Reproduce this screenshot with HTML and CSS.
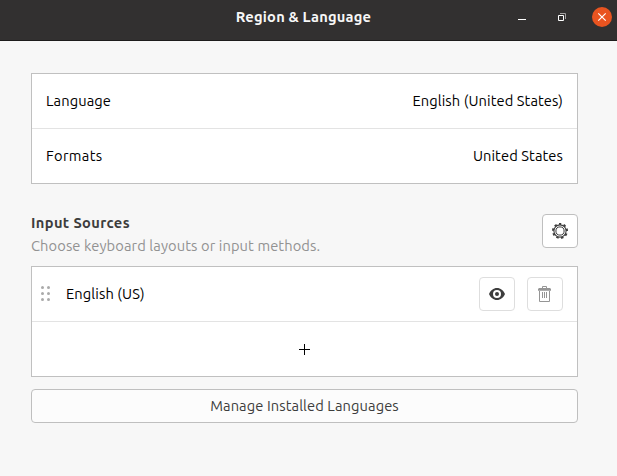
FILE: index.html
```html
<!DOCTYPE html>
<html lang="en">
<head>
<meta charset="utf-8">
<title>Region &amp; Language</title>
<link rel="stylesheet" href="styles.css">
</head>
<body>
<header class="titlebar">
  <h1 class="title">Region &amp; Language</h1>
  <div class="controls">
    <svg width="20" height="20" viewBox="0 0 20 20"><path d="M6 12h8v1H6z" fill="#fff"/></svg>
    <svg width="20" height="20" viewBox="0 0 20 20" fill="none"><path d="M8 6.5h5.5V12" stroke="#a3a1a1"/><path d="M6.5 8.5h5v5h-5z" stroke="#fff"/></svg>
    <svg width="20" height="20" viewBox="0 0 20 20"><circle cx="10" cy="10" r="10" fill="#e95420"/><path d="M6.3 6.3l7.4 7.4M13.7 6.3l-7.4 7.4" stroke="#fff" stroke-width="1.2"/></svg>
  </div>
</header>
<main class="content">
  <section class="list">
    <div class="row"><span class="language">Language</span><span class="locale">English (United States)</span></div>
    <div class="row"><span class="formats">Formats</span><span class="country">United States</span></div>
  </section>
  <section class="section-head">
    <div>
      <h2 class="heading">Input Sources</h2>
      <p class="hint">Choose keyboard layouts or input methods.</p>
    </div>
    <button class="icon-button options" aria-label="Options">
      <svg width="18" height="18" viewBox="0 0 18 18" fill="none" stroke="#3d3d3d"><circle cx="9" cy="9" r="7" stroke-width="2" stroke-dasharray="2.4 2.487" stroke-dashoffset="1.2" transform="rotate(-90 9 9)"/><circle cx="9" cy="9" r="6.1" stroke-width="1.1"/><circle cx="9" cy="9" r="4.1" stroke-width="1"/></svg>
    </button>
  </section>
  <section class="list">
    <div class="row source">
      <svg class="grip" width="9" height="15" viewBox="0 0 9 15" fill="#aaa"><circle cx="1.5" cy="1.5" r="1.5"/><circle cx="7.5" cy="1.5" r="1.5"/><circle cx="1.5" cy="7.5" r="1.5"/><circle cx="7.5" cy="7.5" r="1.5"/><circle cx="1.5" cy="13.5" r="1.5"/><circle cx="7.5" cy="13.5" r="1.5"/></svg>
      <span class="source-name">English (US)</span>
      <button class="icon-button" aria-label="Preview">
        <svg width="16" height="16" viewBox="0 0 16 16"><path fill="#3d3d3d" fill-rule="evenodd" d="M8 2C4.5 2 1.5 4.500 0 8c1.500 3.500 4.500 6 8 6s6.500-2.500 8-6c-1.500-3.500-4.500-6-8-6zm0 2a4 4 0 1 1 0 8 4 4 0 0 1 0-8z"/><circle cx="8" cy="8" r="2" fill="#3d3d3d"/></svg>
      </button>
      <button class="icon-button" aria-label="Remove">
        <svg width="16" height="16" viewBox="0 0 16 16" fill="none" stroke="#959595"><path d="M5.500 2V.5h4V2M2.500 5v10.500h10V5M5.500 6v6M7.500 6v6M9.500 6v6"/><path d="M1 4.800V3l1-1h11l1 1v1.800z" fill="#959595" stroke="none"/></svg>
      </button>
    </div>
    <div class="row add"><svg width="11" height="11" viewBox="0 0 11 11"><path d="M0 5.500h11M5.500 0v11" stroke="#000"/></svg></div>
  </section>
  <button class="manage">Manage Installed Languages</button>
</main>
</body>
</html>
```
FILE: styles.css
```css
* { box-sizing: border-box; }
body {
  margin: 0;
  height: 476px;
  overflow: hidden;
  background: #f7f7f7;
  color: #000;
  font: 14.667px/20px "Ubuntu", "Noto Sans", sans-serif;
  letter-spacing: 0.1px;
}
svg { display: block; flex: none; }
span, h1, h2, p { white-space: nowrap; }
.titlebar {
  display: grid;
  grid-template-columns: 1fr auto 1fr;
  align-items: center;
  height: 41px;
  padding: 0 5px 6px;
  background: #323030;
  border-bottom: 1px solid #1d1c1c;
}
.title {
  grid-column: 2;
  margin: 0 0 0 -10px;
  color: #f7f7f7;
  font-size: 14.667px;
  font-weight: 700;
  letter-spacing: 0.2px;
}
.controls { display: flex; gap: 20px; justify-self: end; }
.content { padding: 32px 39px 0 31px; }
.list { background: #fff; border: 1px solid #c0c0c0; }
.row {
  display: flex;
  align-items: center;
  justify-content: space-between;
  height: 54px;
  padding: 0 14px;
}
.row + .row { height: 55px; border-top: 1px solid #e3e3e3; }
.formats { letter-spacing: 0.35px; }
.section-head {
  display: flex;
  justify-content: space-between;
  height: 82px;
  padding-top: 30px;
}
.heading { margin: 0; font-size: 14.667px; line-height: 18px; letter-spacing: 0.38px; color: #3d3d3d; }
.hint { margin: 4px 0 0; color: #929292; }
.icon-button {
  display: flex;
  align-items: center;
  justify-content: center;
  width: 36px;
  height: 34px;
  padding: 0;
  border: 1px solid #dedede;
  border-radius: 4px;
  background: #fff;
}
.options { border-color: #bfbfbf; }
.source { gap: 12px; padding-left: 9px; }
.grip { margin-bottom: 1px; }
.source-name { flex: 1; margin-left: 4px; }
.row.add { justify-content: center; }
.manage {
  display: block;
  width: 100%;
  height: 34px;
  margin-top: 12px;
  padding: 0;
  border: 1px solid #bfbfbf;
  border-radius: 4px;
  background: #fcfcfc;
  color: #3d3d3d;
  font: inherit;
  letter-spacing: 0.1px;
}
```
